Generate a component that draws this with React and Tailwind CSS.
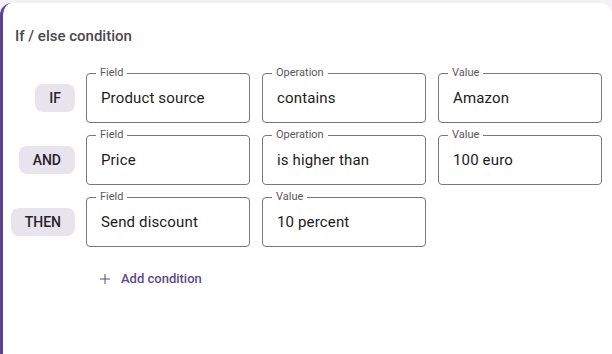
import { Plus } from 'lucide-react'

const rows = [
  { tag: 'IF', fields: [['Field', 'Product source'], ['Operation', 'contains'], ['Value', 'Amazon']] },
  { tag: 'AND', fields: [['Field', 'Price'], ['Operation', 'is higher than'], ['Value', '100 euro']] },
  { tag: 'THEN', fields: [['Field', 'Send discount'], ['Value', '10 percent']] },
]

const OutlinedField = ({ label, value }) => (
  <div className="relative flex h-[50px] w-[164px] items-center rounded-[4px] border border-[#79767d] px-[14px]">
    <span className="absolute -top-[8px] left-[9px] bg-white px-[4px] text-[11px] leading-[14px] text-[#5a5660]">{label}</span>
    <span className="text-[15px] tracking-[0.15px] text-[#1d1b20]">{value}</span>
  </div>
)

export default function App() {
  return (
    <div className="h-[354px] w-[612px] bg-[#f3f0f7] pt-[3px]" style={{ fontFamily: 'Roboto, "Liberation Sans", sans-serif' }}>
      <section className="h-full rounded-t-[12px] border-l-[3px] border-[#5b4297] bg-white pt-[23px]">
        <h2 className="pl-[12px] text-[15px] leading-[20px] font-medium text-[#4a4750]">If / else condition</h2>

        <div className="mt-[27px] flex flex-col gap-[12px]">
          {rows.map((row) => (
            <div key={row.tag} className="flex items-center gap-[11px]">
              <div className="flex w-[72px] justify-end">
                <span className="flex h-7 items-center rounded-[8px] bg-[#e8e4ee] px-[14px] text-sm font-medium text-[#26232b]">{row.tag}</span>
              </div>
              <div className="flex gap-[12px]">
                {row.fields.map(([label, value]) => <OutlinedField key={label} label={label} value={value} />)}
              </div>
            </div>
          ))}
        </div>

        <button type="button" className="mt-[19px] ml-[90px] flex items-center gap-[8px] px-[4px] py-[4px] text-[13px] leading-[18px] font-medium text-[#5a4a8c]">
          <Plus size={16} strokeWidth={1.5} /> Add condition
        </button>
      </section>
    </div>
  )
}
